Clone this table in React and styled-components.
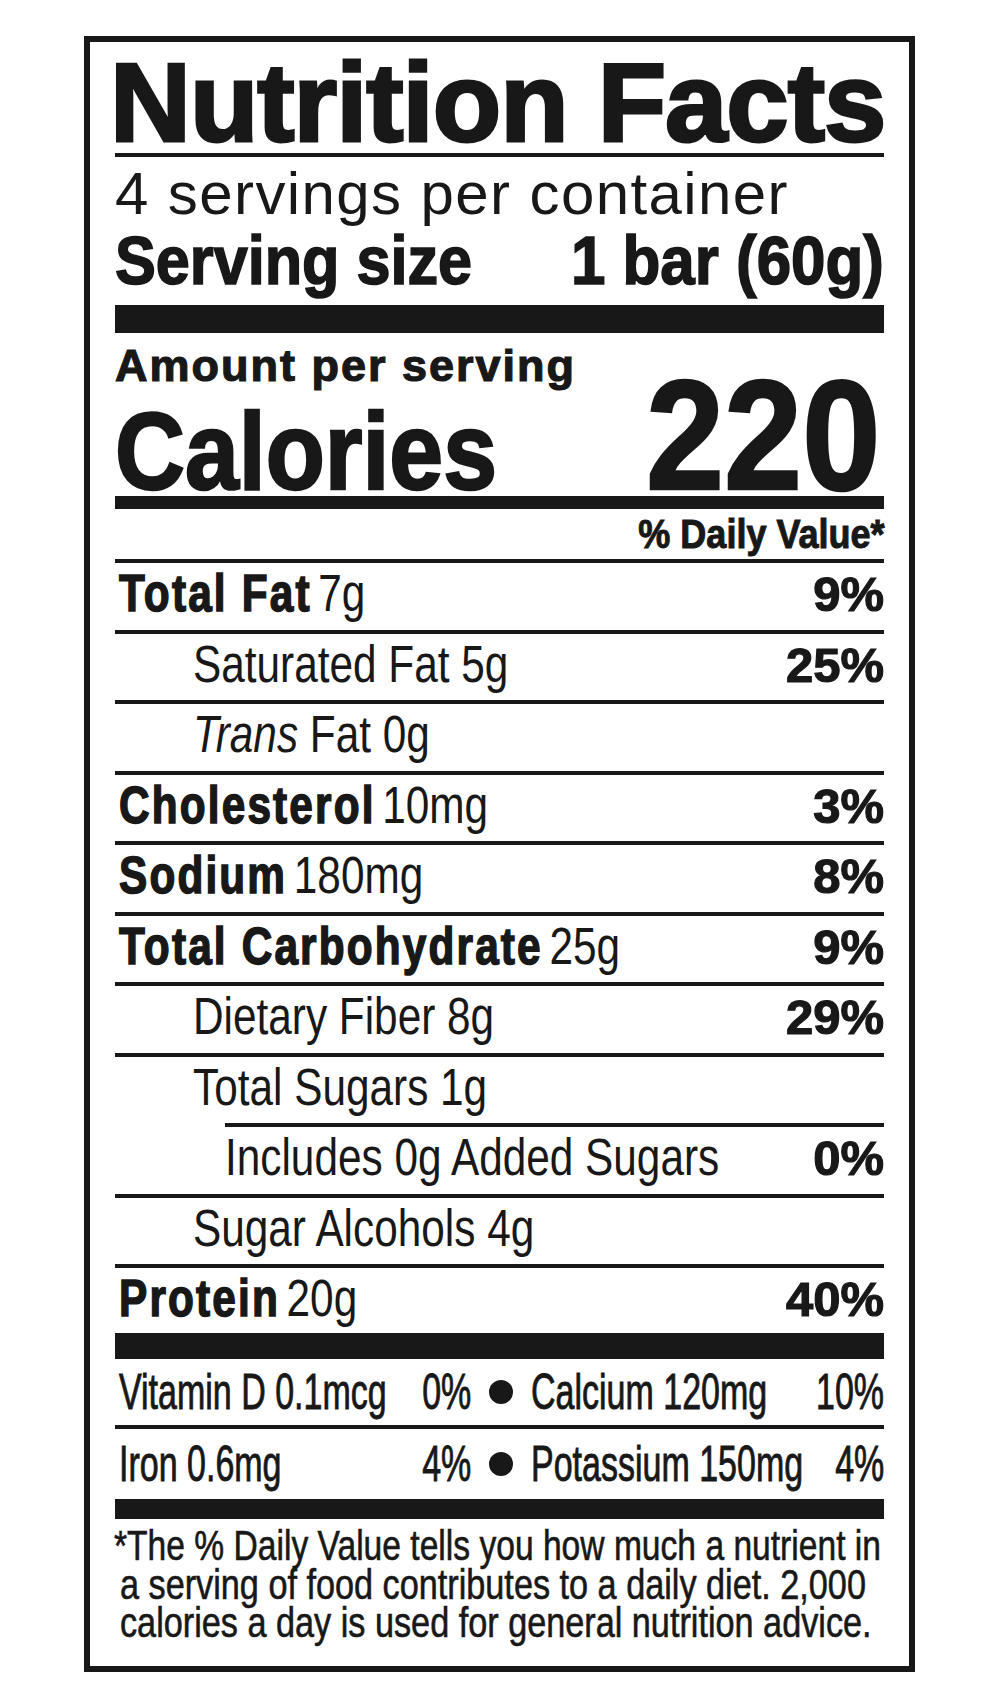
import React from "react";
import styled, { createGlobalStyle } from "styled-components";

const INK = "#181818";
const SANS = `"Liberation Sans", Arial, Helvetica, sans-serif`;

const GlobalStyle = createGlobalStyle`
    html, body {
        margin: 0;
        padding: 0;
        background: #fff;
        color: ${INK};
        font-family: ${SANS};
    }
`;

// condensed type: the label face is a condensed grotesque, so squeeze Liberation Sans
const Squeeze = styled.span`
    display: inline-block;
    white-space: nowrap;
    transform: scaleX(${props => props.$k});
    transform-origin: ${props => (props.$right ? "right" : "left")} center;
`;

const Label = styled.section`
    box-sizing: border-box;
    width: 831px;
    margin: 36px 0 0 84px;
    border: 6px solid ${INK};
    padding: 0 25px 23px;
`;

const Title = styled.h1`
    margin: 0 0 0 -5px;
    padding-top: 11px;
    font: 700 112px/100px ${SANS};
    letter-spacing: -1px;
    -webkit-text-stroke: 3px ${INK};
    white-space: nowrap;
`;

const Rule = styled.div`
    height: ${props => props.$h || 4}px;
    margin-top: ${props => props.$gap || 0}px;
    background: ${INK};
`;

const Servings = styled.div`
    margin-top: 6px;
    font: 400 60px/62px ${SANS};
    letter-spacing: 1.4px;
    white-space: nowrap;
`;

const ServingSize = styled.div`
    display: flex;
    justify-content: space-between;
    padding-bottom: 10px;
    font: 700 68px/70px ${SANS};
    -webkit-text-stroke: 1.6px ${INK};
`;

const Amount = styled.div`
    padding-top: 8px;
    font: 700 45px/50px ${SANS};
    letter-spacing: 2px;
    -webkit-text-stroke: 1.2px ${INK};
`;

const CaloriesRow = styled.div`
    display: flex;
    justify-content: space-between;
    align-items: baseline;
`;

const CaloriesWord = styled.span`
    font: 700 110px/72px ${SANS};
    -webkit-text-stroke: 2.5px ${INK};
`;

const CaloriesValue = styled.span`
    margin-right: 4px;
    font: 700 156px/88px ${SANS};
    -webkit-text-stroke: 2.5px ${INK};
`;

const DVHeader = styled.div`
    text-align: right;
    font: 700 40px/50px ${SANS};
    -webkit-text-stroke: 1px ${INK};
`;

const NutrientRow = styled.div`
    box-sizing: border-box;
    display: grid;
    grid-template-columns: minmax(0, 1fr);
    align-items: start;
    height: ${props => props.$h}px;
    margin-left: ${props => (props.$level === 2 ? 110 : 0)}px;
    padding-left: ${props => (props.$level === 1 ? 78 : props.$level === 2 ? 0 : 4)}px;
    border-top: 4px solid ${INK};
    line-height: 62px;
`;

const RowText = styled(Squeeze)`
    grid-area: 1 / 1;
    justify-self: start;
`;

const Name = styled.span`
    margin-right: 8px;
    font: 700 51px/62px ${SANS};
    letter-spacing: 2.6px;
    -webkit-text-stroke: 1.5px ${INK};
`;

const Qty = styled.span`
    font: 400 51px/62px ${SANS};
    em {
        font-style: italic;
    }
`;

const Pct = styled.span`
    grid-area: 1 / 1;
    justify-self: end;
    font: 700 49px/62px ${SANS};
    -webkit-text-stroke: 1.2px ${INK};
`;

const MineralRow = styled.div`
    box-sizing: border-box;
    display: grid;
    grid-template-columns: 352px 60px minmax(0, 1fr);
    align-items: center;
    height: ${props => props.$h}px;
    border-top: ${props => (props.$ruled ? `4px solid ${INK}` : "none")};
    padding-left: 4px;
    font: 400 50px/${props => props.$line}px ${SANS};
    -webkit-text-stroke: 0.9px ${INK};
`;

const MineralHalf = styled.div`
    display: grid;
    grid-template-columns: minmax(0, 1fr);
`;

const MineralText = styled(Squeeze)`
    grid-area: 1 / 1;
    justify-self: ${props => (props.$right ? "end" : "start")};
`;

const Dot = styled.span`
    justify-self: center;
    width: 24px;
    height: 24px;
    border-radius: 50%;
    background: ${INK};
`;

const Footnote = styled.div`
    padding: 8px 0 0 5px;
    font: 400 42px/38.5px ${SANS};
    -webkit-text-stroke: 0.6px ${INK};
`;

const FootLine = styled(Squeeze)`
    display: block;
    margin-left: ${props => (props.$hang ? -6 : 0)}px;
`;

const nutrients = [
    { name: "Total Fat", qty: "7g", pct: "9%" },
    { level: 1, qty: "Saturated Fat 5g", pct: "25%" },
    { level: 1, italic: "Trans", qty: " Fat 0g" },
    { name: "Cholesterol", qty: "10mg", pct: "3%" },
    { name: "Sodium", qty: "180mg", pct: "8%" },
    { name: "Total Carbohydrate", qty: "25g", pct: "9%" },
    { level: 1, qty: "Dietary Fiber 8g", pct: "29%" },
    { level: 1, qty: "Total Sugars 1g" },
    { level: 2, qty: "Includes 0g Added Sugars", pct: "0%" },
    { level: 1, qty: "Sugar Alcohols 4g" },
    { name: "Protein", qty: "20g", pct: "40%", h: 69 }
];

const minerals = [
    [
        ["Vitamin D 0.1mcg", "0%"],
        ["Calcium 120mg", "10%"]
    ],
    [
        ["Iron 0.6mg", "4%"],
        ["Potassium 150mg", "4%"]
    ]
];

const footnote = [
    { text: "*The % Daily Value tells you how much a nutrient in", k: 0.8 },
    { text: "a serving of food contributes to a daily diet. 2,000", k: 0.815 },
    { text: "calories a day is used for general nutrition advice.", k: 0.815 }
];

export default function App() {
    return (
        <>
            <GlobalStyle />
            <Label>
                <Title>Nutrition Facts</Title>
                <Rule />
                <Servings>4 servings per container</Servings>
                <ServingSize>
                    <Squeeze $k={0.9}>Serving size</Squeeze>
                    <Squeeze $k={0.91} $right>
                        1 bar (60g)
                    </Squeeze>
                </ServingSize>
                <Rule $h={28} />
                <Amount>Amount per serving</Amount>
                <CaloriesRow>
                    <CaloriesWord>
                        <Squeeze $k={0.88}>Calories</Squeeze>
                    </CaloriesWord>
                    <CaloriesValue>
                        <Squeeze $k={0.9} $right>
                            220
                        </Squeeze>
                    </CaloriesValue>
                </CaloriesRow>
                <Rule $h={13} $gap={9} />
                <DVHeader>
                    <Squeeze $k={0.9} $right>
                        % Daily Value*
                    </Squeeze>
                </DVHeader>
                {nutrients.map((n, i) => (
                    <NutrientRow key={i} $level={n.level || 0} $h={n.h || 70.5}>
                        <RowText $k={0.83}>
                            {n.name && <Name>{n.name}</Name>}
                            <Qty>
                                {n.italic && <em>{n.italic}</em>}
                                {n.qty}
                            </Qty>
                        </RowText>
                        {n.pct && <Pct>{n.pct}</Pct>}
                    </NutrientRow>
                ))}
                <Rule $h={26} />
                {minerals.map((row, i) => (
                    <MineralRow
                        key={i}
                        $ruled={i > 0}
                        $h={i > 0 ? 74 : 66}
                        $line={i > 0 ? 70 : 66}
                    >
                        <MineralHalf>
                            <MineralText $k={0.68}>{row[0][0]}</MineralText>
                            <MineralText $k={0.68} $right>
                                {row[0][1]}
                            </MineralText>
                        </MineralHalf>
                        <Dot />
                        <MineralHalf>
                            <MineralText $k={0.68}>{row[1][0]}</MineralText>
                            <MineralText $k={0.68} $right>
                                {row[1][1]}
                            </MineralText>
                        </MineralHalf>
                    </MineralRow>
                ))}
                <Rule $h={20} />
                <Footnote>
                    {footnote.map((line, i) => (
                        <FootLine key={i} $k={line.k} $hang={i === 0}>
                            {line.text}
                        </FootLine>
                    ))}
                </Footnote>
            </Label>
        </>
    );
}
